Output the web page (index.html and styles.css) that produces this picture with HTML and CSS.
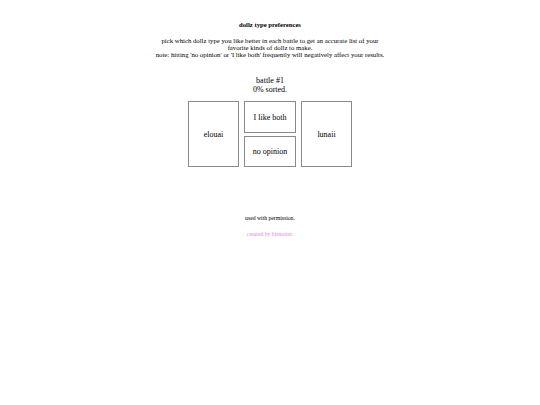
FILE: index.html
```html
<!DOCTYPE html>
<html>
<head>
<meta charset="utf-8">
<title>dollz type preferences</title>
<link rel="stylesheet" href="styles.css">
</head>
<body>
<div class="page">
  <h1 class="title">dollz type preferences</h1>
  <p class="intro">pick which dollz type you like better in each battle to get an accurate list of your<br>favorite kinds of dollz to make.<br>note: hitting 'no opinion' or 'I like both' frequently will negatively affect your results.</p>
  <div class="battle">battle #1<br>0% sorted.</div>
  <div class="choices">
    <div class="choice left">elouai</div>
    <div class="choice tie">I like both</div>
    <div class="choice skip">no opinion</div>
    <div class="choice right">lunaii</div>
  </div>
  <p class="credit">used with permission.</p>
  <p class="author">created by bisnorier.</p>
</div>
</body>
</html>
```

FILE: styles.css
```css
html, body {
  margin: 0;
  padding: 0;
  background: #ffffff;
}

body {
  font-family: "Liberation Serif", "Times New Roman", serif;
  color: #000000;
}

.page {
  display: flex;
  flex-direction: column;
  align-items: center;
  padding-top: 21px;
  text-align: center;
}

.title {
  margin: 0;
  font-size: 6.67px;
  line-height: 8px;
  font-weight: bold;
}

.intro {
  margin: 9px 0 0;
  font-size: 6.75px;
  line-height: 6.8px;
}

.battle {
  margin-top: 18px;
  font-size: 8px;
  line-height: 9px;
}

.choices {
  margin-top: 7px;
  display: grid;
  grid-template-columns: 51px 52px 51px;
  grid-template-rows: 32px 31px;
  column-gap: 5px;
  row-gap: 3px;
}

.choice {
  box-sizing: border-box;
  border: 1px solid #8a8a8a;
  display: flex;
  align-items: center;
  justify-content: center;
  font-size: 8px;
}

.left {
  grid-column: 1;
  grid-row: 1 / 3;
}

.tie {
  grid-column: 2;
  grid-row: 1;
}

.skip {
  grid-column: 2;
  grid-row: 2;
}

.right {
  grid-column: 3;
  grid-row: 1 / 3;
}

.credit {
  margin: 48px 0 0;
  font-size: 5.7px;
  line-height: 6.5px;
}

.author {
  margin: 9px 0 0;
  font-size: 5.7px;
  line-height: 6.5px;
  color: #dd88dd;
}
```
